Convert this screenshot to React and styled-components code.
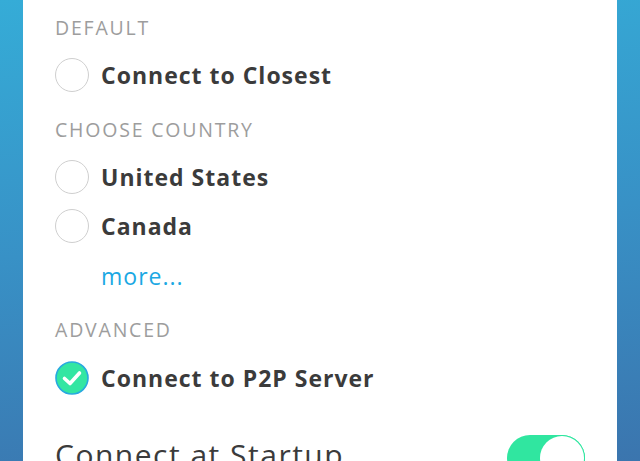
import React from "react";
import styled, { createGlobalStyle } from "styled-components";

const Global = createGlobalStyle`
  html, body { margin: 0; padding: 0; height: 100%; }
  body {
    background: linear-gradient(175deg, #35acd7 0%, #3891c6 50%, #3b75ae 100%);
    font-family: "Open Sans", "Liberation Sans", sans-serif;
    overflow: hidden;
  }
  #root { height: 100%; }
`;

const Page = styled.div`
  height: 461px;
  padding: 0 23px;
  display: flex;
`;

const Panel = styled.div`
  flex: 1;
  background: #ffffff;
  padding: 16px 32px 0 32px;
  display: flex;
  flex-direction: column;
  overflow: hidden;
`;

const Section = styled.div`
  display: flex;
  flex-direction: column;
  margin-top: ${(p) => p.$mt || 0}px;
`;

const Header = styled.div`
  height: 24px;
  line-height: 24px;
  font-size: 19.5px;
  color: #9d9d9d;
  letter-spacing: 1.8px;
  margin-bottom: ${(p) => p.$mb || 15}px;
`;

const Row = styled.div`
  height: 40px;
  display: flex;
  align-items: center;
  gap: 12px;
  margin-top: ${(p) => p.$mt || 0}px;
`;

const Circle = styled.div`
  width: 34px;
  height: 34px;
  box-sizing: border-box;
  border-radius: 50%;
  border: 1.5px solid #cfcfcf;
  flex-shrink: 0;
`;

const Label = styled.span`
  font-size: 23px;
  font-weight: 700;
  color: #3b3b3b;
  letter-spacing: 1px;
`;

const More = styled.div`
  height: 40px;
  line-height: 40px;
  margin-top: 10px;
  padding-left: 46px;
  font-size: 23px;
  color: #1ba8e3;
  letter-spacing: 1px;
`;

const StartupRow = styled.div`
  margin-top: 37px;
  height: 48px;
  display: flex;
  align-items: flex-start;
  justify-content: space-between;
`;

const StartupText = styled.span`
  font-size: 30px;
  color: #3b3b3b;
  line-height: 40px;
  letter-spacing: 1.5px;
`;

const Toggle = styled.div`
  width: 78px;
  height: 46px;
  border-radius: 23px;
  background: #30e6a0;
  position: relative;
`;

const Knob = styled.div`
  position: absolute;
  right: 1px;
  top: 1px;
  width: 44px;
  height: 44px;
  border-radius: 50%;
  background: #fff;
  box-shadow: 0 0 0 1px #30e6a0;
`;

const Check = () => (
  <svg width="34" height="34" viewBox="0 0 34 34">
    <circle cx="17" cy="17" r="16" fill="#33e6a2" stroke="#27a9df" strokeWidth="1.6" />
    <path
      d="M9.5 17.5 L15 22.5 L24.5 12"
      fill="none"
      stroke="#ffffff"
      strokeWidth="3.6"
      strokeLinecap="round"
      strokeLinejoin="round"
    />
  </svg>
);

export default function App() {
  return (
    <>
      <Global />
      <Page>
        <Panel>
          <Section>
            <Header>DEFAULT</Header>
            <Row>
              <Circle />
              <Label>Connect to Closest</Label>
            </Row>
          </Section>
          <Section $mt={23}>
            <Header>CHOOSE COUNTRY</Header>
            <Row>
              <Circle />
              <Label>United States</Label>
            </Row>
            <Row $mt={9}>
              <Circle />
              <Label>Canada</Label>
            </Row>
            <More>more...</More>
          </Section>
          <Section $mt={22}>
            <Header $mb={16}>ADVANCED</Header>
            <Row>
              <Check />
              <Label>Connect to P2P Server</Label>
            </Row>
          </Section>
          <StartupRow>
            <StartupText>Connect at Startup</StartupText>
            <Toggle>
              <Knob />
            </Toggle>
          </StartupRow>
        </Panel>
      </Page>
    </>
  );
}
